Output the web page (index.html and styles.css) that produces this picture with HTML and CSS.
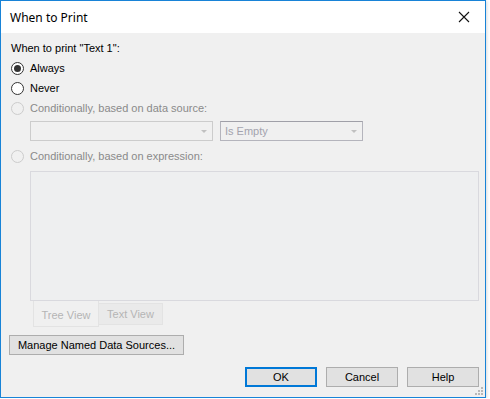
FILE: index.html
```html
<!DOCTYPE html>
<html lang="en">
<head>
  <meta charset="UTF-8" />
  <title>When to Print</title>
  <link rel="stylesheet" href="styles.css">
</head>
<body>
  <div class="dialog">
    <div class="titlebar">
      <span class="title">When to Print</span>
      <svg class="close" width="12" height="12" viewBox="0 0 12 12">
        <path d="M1 1 L11 11 M11 1 L1 11" stroke="#111" stroke-width="1.1" fill="none" />
      </svg>
    </div>
    <div class="content">
      <div class="caption">When to print "Text 1":</div>

      <div class="radio-row">
        <span class="radio checked"></span>
        <span>Always</span>
      </div>
      <div class="radio-row">
        <span class="radio"></span>
        <span>Never</span>
      </div>
      <div class="radio-row disabled">
        <span class="radio"></span>
        <span>Conditionally, based on data source:</span>
      </div>

      <div class="combo-row">
        <div class="combo combo-source">
          <span class="combo-text"></span>
          <span class="arrow"></span>
        </div>
        <div class="combo combo-op">
          <span class="combo-text">Is Empty</span>
          <span class="arrow"></span>
        </div>
      </div>

      <div class="radio-row disabled expr-row">
        <span class="radio"></span>
        <span>Conditionally, based on expression:</span>
      </div>

      <div class="expr-box"></div>

      <div class="tabs">
        <div class="tab active">Tree View</div>
        <div class="tab">Text View</div>
      </div>

      <button class="btn manage">Manage Named Data Sources...</button>

      <div class="footer">
        <button class="btn default">OK</button>
        <button class="btn">Cancel</button>
        <button class="btn">Help</button>
      </div>

      <svg class="grip" width="9" height="9" viewBox="0 0 9 9">
        <rect x="6" y="0" width="2" height="2" fill="#b8b8b8" />
        <rect x="3" y="3" width="2" height="2" fill="#b8b8b8" />
        <rect x="6" y="3" width="2" height="2" fill="#b8b8b8" />
        <rect x="0" y="6" width="2" height="2" fill="#b8b8b8" />
        <rect x="3" y="6" width="2" height="2" fill="#b8b8b8" />
        <rect x="6" y="6" width="2" height="2" fill="#b8b8b8" />
      </svg>
    </div>
  </div>
</body>
</html>
```

FILE: styles.css
```css
body {
  margin: 0;
  background: #fff;
  font-family: 'Liberation Sans', Arial, sans-serif;
  font-size: 11px;
  color: #000;
}

.dialog {
  width: 484px;
  height: 396px;
  border: 1px solid #1883d7;
  display: flex;
  flex-direction: column;
  box-shadow: 1px 1px 3px rgba(0, 0, 0, 0.15);
}

.titlebar {
  height: 32px;
  background: #fff;
  display: flex;
  align-items: center;
  justify-content: space-between;
  padding: 0 15px 0 9px;
  flex-shrink: 0;
}

.title {
  font-family: 'Noto Sans', sans-serif;
  font-size: 12px;
  color: #000;
}

.content {
  flex: 1;
  background: #f0f0f0;
  position: relative;
  display: flex;
  flex-direction: column;
  align-items: flex-start;
}

.caption {
  margin: 8px 0 0 10px;
  line-height: 14px;
}

.radio-row {
  display: flex;
  align-items: center;
  gap: 6px;
  height: 20px;
  margin-left: 10px;
}

.caption + .radio-row {
  margin-top: 3px;
}

.radio {
  width: 11px;
  height: 11px;
  border: 1px solid #333;
  border-radius: 50%;
  background: #fff;
  display: flex;
  align-items: center;
  justify-content: center;
}

.radio.checked::after {
  content: "";
  width: 7px;
  height: 7px;
  border-radius: 50%;
  background: #333;
}

.radio-row.disabled {
  color: #8a8a8a;
}

.radio-row.disabled .radio {
  border-color: #cccccc;
  background: #f0f0f0;
}

.combo-row {
  display: flex;
  gap: 7px;
  margin: 3px 0 0 29px;
}

.combo {
  height: 20px;
  box-sizing: border-box;
  display: flex;
  align-items: center;
  justify-content: space-between;
  padding: 0 4px 0 4px;
}

.combo-source {
  width: 183px;
  border: 1px solid #cccccc;
}

.combo-op {
  width: 143px;
  border: 1px solid #b4b4bc;
  border-top-color: #a0a0a8;
  color: #a3a3ae;
}

.arrow {
  width: 0;
  height: 0;
  border-left: 3px solid transparent;
  border-right: 3px solid transparent;
  border-top: 3px solid #c0c0c0;
  margin-right: 1px;
}

.expr-row {
  margin-top: 5px;
}

.expr-box {
  margin: 5px 0 0 29px;
  width: 449px;
  height: 130px;
  box-sizing: border-box;
  border: 1px solid #d9d9de;
  background: #eeeff0;
}

.tabs {
  display: flex;
  align-items: flex-start;
  margin-left: 32px;
}

.tab {
  box-sizing: border-box;
  color: #b5b5b5;
  display: flex;
  align-items: center;
  justify-content: center;
  border: 1px solid #e3e3e3;
}

.tab.active {
  width: 66px;
  height: 26px;
  border-top: none;
  background: #f0f0f0;
  padding-top: 2px;
}

.tab:not(.active) {
  width: 64px;
  height: 22px;
  margin-top: 2px;
  border-left: none;
  background: #eaeaea;
}

.btn {
  font-family: 'Liberation Sans', Arial, sans-serif;
  font-size: 11px;
  color: #000;
  height: 20px;
  box-sizing: border-box;
  background: #e1e1e1;
  border: 1px solid #adadad;
  padding: 0;
}

.manage {
  width: 175px;
  margin: 8px 0 0 8px;
}

.footer {
  align-self: stretch;
  display: flex;
  justify-content: flex-end;
  gap: 9px;
  margin-top: 12px;
  padding-right: 6px;
}

.footer .btn {
  width: 72px;
}

.footer .btn.default {
  border: 2px solid #0078d7;
}

.grip {
  position: absolute;
  right: 1px;
  bottom: 1px;
}
```
